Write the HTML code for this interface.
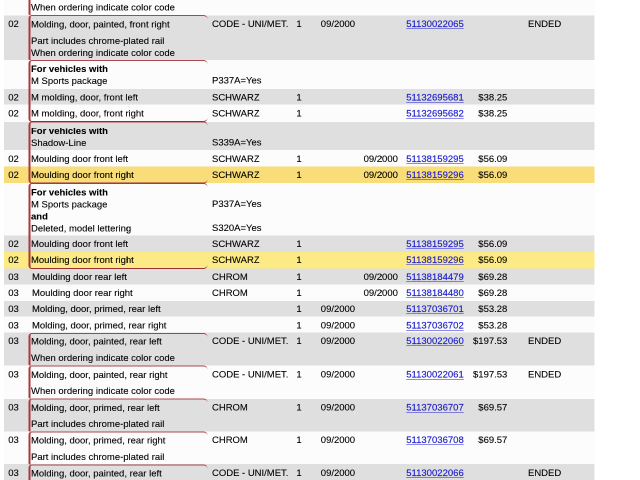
<!DOCTYPE html>
<html><head><meta charset="utf-8"><title>Parts</title><style>
html,body{margin:0;padding:0;background:#fff;}
body{width:640px;height:480px;overflow:hidden;position:relative;}
#w{position:absolute;left:0;top:0;width:1280px;height:960px;transform:scale(0.5);transform-origin:0 0;
 font-family:"Liberation Sans",Helvetica,Arial,sans-serif;font-size:18.98px;line-height:24px;color:#000;-webkit-text-stroke:0.2px #000;overflow:hidden;will-change:transform;}
.r{position:absolute;left:8px;width:1181px;}
.t{position:absolute;white-space:nowrap;}
.b{font-weight:bold;}
a{color:#1d1dcc;text-decoration:underline;-webkit-text-stroke:0.3px #1d1dcc;font-size:19.06px;text-underline-offset:2.6px;text-decoration-thickness:1.4px;}
.g{position:absolute;left:56.5px;width:358.5px;box-sizing:border-box;border-left:4px solid #aa383d;border-top:2px solid rgba(160,40,50,0.85);border-radius:6.5px 8px 0 2px;}
.gb{border-bottom:2px solid #9c3037;border-radius:6.5px 8px 8px 6.5px;}
</style></head><body><div id="w">
<div class="r" style="top:-10px;height:41px;background:#fcfcfc"></div>
<div class="r" style="top:31px;height:89px;background:#dfdfdf"></div>
<div class="r" style="top:120px;height:58px;background:#fcfcfc"></div>
<div class="r" style="top:178px;height:31px;background:#dfdfdf"></div>
<div class="r" style="top:209px;height:35px;background:#fcfcfc"></div>
<div class="r" style="top:244px;height:56px;background:#dfdfdf"></div>
<div class="r" style="top:300px;height:33px;background:#fcfcfc"></div>
<div class="r" style="top:333px;height:33px;background:#f9dd78"></div>
<div class="r" style="top:366px;height:105px;background:#fcfcfc"></div>
<div class="r" style="top:471px;height:33px;background:#dfdfdf"></div>
<div class="r" style="top:504px;height:33px;background:#fceb84"></div>
<div class="r" style="top:537px;height:32px;background:#dfdfdf"></div>
<div class="r" style="top:569px;height:33px;background:#fcfcfc"></div>
<div class="r" style="top:602px;height:31px;background:#dfdfdf"></div>
<div class="r" style="top:633px;height:32px;background:#fcfcfc"></div>
<div class="r" style="top:665px;height:66px;background:#dfdfdf"></div>
<div class="r" style="top:731px;height:67px;background:#fcfcfc"></div>
<div class="r" style="top:798px;height:65px;background:#dfdfdf"></div>
<div class="r" style="top:863px;height:65px;background:#fcfcfc"></div>
<div class="r" style="top:928px;height:52px;background:#dfdfdf"></div>
<div class="g" style="top:-21px;height:51px"></div>
<div class="g" style="top:30px;height:90px"></div>
<div class="g gb" style="top:120px;height:124.2px"></div>
<div class="g gb" style="top:243.2px;height:123.8px"></div>
<div class="g gb" style="top:366px;height:172.2px"></div>
<div class="g" style="top:666.4px;height:64.2px"></div>
<div class="g" style="top:730.6px;height:66.6px"></div>
<div class="g" style="top:797.2px;height:65.4px"></div>
<div class="g" style="top:862.6px;height:66.2px"></div>
<div class="g" style="top:928.8px;height:70.2px"></div>
<div class="t" style="left:62px;top:2.92px">When ordering indicate color code</div>
<div class="t" style="left:16.4px;top:35.52px">02</div>
<div class="t" style="left:62px;top:36.52px">Molding, door, painted, front right</div>
<div class="t" style="left:424px;top:35.52px">CODE - UNI/MET.</div>
<div class="t" style="left:592.8px;top:35.52px">1</div>
<div class="t" style="left:641.6px;top:35.52px">09/2000</div>
<div class="t" style="left:812.4px;top:35.52px"><a>51130022065</a></div>
<div class="t" style="left:1056px;top:35.52px">ENDED</div>
<div class="t" style="left:62px;top:69.72px">Part includes chrome-plated rail</div>
<div class="t" style="left:62px;top:93.52px">When ordering indicate color code</div>
<div class="t b" style="left:62px;top:126.32px">For vehicles with</div>
<div class="t" style="left:62px;top:150.32px">M Sports package</div>
<div class="t" style="left:424px;top:149.32px">P337A=Yes</div>
<div class="t" style="left:16.4px;top:182.72px">02</div>
<div class="t" style="left:62px;top:182.72px">M molding, door, front left</div>
<div class="t" style="left:424px;top:182.72px">SCHWARZ</div>
<div class="t" style="left:592.8px;top:182.72px">1</div>
<div class="t" style="left:812.4px;top:182.72px"><a>51132695681</a></div>
<div class="t" style="right:265.4px;top:182.72px">$38.25</div>
<div class="t" style="left:16.4px;top:214.72px">02</div>
<div class="t" style="left:62px;top:214.72px">M molding, door, front right</div>
<div class="t" style="left:424px;top:214.72px">SCHWARZ</div>
<div class="t" style="left:592.8px;top:214.72px">1</div>
<div class="t" style="left:812.4px;top:214.72px"><a>51132695682</a></div>
<div class="t" style="right:265.4px;top:214.72px">$38.25</div>
<div class="t b" style="left:62px;top:250.42px">For vehicles with</div>
<div class="t" style="left:62px;top:274.12px">Shadow-Line</div>
<div class="t" style="left:424px;top:273.12px">S339A=Yes</div>
<div class="t" style="left:16.4px;top:305.52px">02</div>
<div class="t" style="left:62px;top:305.52px">Moulding door front left</div>
<div class="t" style="left:424px;top:305.52px">SCHWARZ</div>
<div class="t" style="left:592.8px;top:305.52px">1</div>
<div class="t" style="left:727.2px;top:305.52px">09/2000</div>
<div class="t" style="left:812.4px;top:305.52px"><a>51138159295</a></div>
<div class="t" style="right:265.4px;top:305.52px">$56.09</div>
<div class="t" style="left:16.4px;top:337.52px">02</div>
<div class="t" style="left:62px;top:337.52px">Moulding door front right</div>
<div class="t" style="left:424px;top:337.52px">SCHWARZ</div>
<div class="t" style="left:592.8px;top:337.52px">1</div>
<div class="t" style="left:727.2px;top:337.52px">09/2000</div>
<div class="t" style="left:812.4px;top:337.52px"><a>51138159296</a></div>
<div class="t" style="right:265.4px;top:337.52px">$56.09</div>
<div class="t b" style="left:62px;top:373.22px">For vehicles with</div>
<div class="t" style="left:62px;top:396.92px">M Sports package</div>
<div class="t" style="left:424px;top:395.92px">P337A=Yes</div>
<div class="t b" style="left:62px;top:420.82px">and</div>
<div class="t" style="left:62px;top:444.82px">Deleted, model lettering</div>
<div class="t" style="left:424px;top:443.82px">S320A=Yes</div>
<div class="t" style="left:16.4px;top:475.72px">02</div>
<div class="t" style="left:62px;top:475.72px">Moulding door front left</div>
<div class="t" style="left:424px;top:475.72px">SCHWARZ</div>
<div class="t" style="left:592.8px;top:475.72px">1</div>
<div class="t" style="left:812.4px;top:475.72px"><a>51138159295</a></div>
<div class="t" style="right:265.4px;top:475.72px">$56.09</div>
<div class="t" style="left:16.4px;top:508.12px">02</div>
<div class="t" style="left:62px;top:508.12px">Moulding door front right</div>
<div class="t" style="left:424px;top:508.12px">SCHWARZ</div>
<div class="t" style="left:592.8px;top:508.12px">1</div>
<div class="t" style="left:812.4px;top:508.12px"><a>51138159296</a></div>
<div class="t" style="right:265.4px;top:508.12px">$56.09</div>
<div class="t" style="left:16.4px;top:542.12px">03</div>
<div class="t" style="left:64px;top:542.12px">Moulding door rear left</div>
<div class="t" style="left:424px;top:542.12px">CHROM</div>
<div class="t" style="left:592.8px;top:542.12px">1</div>
<div class="t" style="left:727.2px;top:542.12px">09/2000</div>
<div class="t" style="left:812.4px;top:542.12px"><a>51138184479</a></div>
<div class="t" style="right:265.4px;top:542.12px">$69.28</div>
<div class="t" style="left:16.4px;top:573.82px">03</div>
<div class="t" style="left:64px;top:573.82px">Moulding door rear right</div>
<div class="t" style="left:424px;top:573.82px">CHROM</div>
<div class="t" style="left:592.8px;top:573.82px">1</div>
<div class="t" style="left:727.2px;top:573.82px">09/2000</div>
<div class="t" style="left:812.4px;top:573.82px"><a>51138184480</a></div>
<div class="t" style="right:265.4px;top:573.82px">$69.28</div>
<div class="t" style="left:16.4px;top:605.72px">03</div>
<div class="t" style="left:64px;top:605.72px">Molding, door, primed, rear left</div>
<div class="t" style="left:592.8px;top:605.72px">1</div>
<div class="t" style="left:641.6px;top:605.72px">09/2000</div>
<div class="t" style="left:812.4px;top:605.72px"><a>51137036701</a></div>
<div class="t" style="right:265.4px;top:605.72px">$53.28</div>
<div class="t" style="left:16.4px;top:638.72px">03</div>
<div class="t" style="left:64px;top:638.72px">Molding, door, primed, rear right</div>
<div class="t" style="left:592.8px;top:638.72px">1</div>
<div class="t" style="left:641.6px;top:638.72px">09/2000</div>
<div class="t" style="left:812.4px;top:638.72px"><a>51137036702</a></div>
<div class="t" style="right:265.4px;top:638.72px">$53.28</div>
<div class="t" style="left:16.4px;top:670.32px">03</div>
<div class="t" style="left:62px;top:671.32px">Molding, door, painted, rear left</div>
<div class="t" style="left:424px;top:670.32px">CODE - UNI/MET.</div>
<div class="t" style="left:592.8px;top:670.32px">1</div>
<div class="t" style="left:641.6px;top:670.32px">09/2000</div>
<div class="t" style="left:812.4px;top:670.32px"><a>51130022060</a></div>
<div class="t" style="right:265.4px;top:670.32px">$197.53</div>
<div class="t" style="left:1056px;top:670.32px">ENDED</div>
<div class="t" style="left:62px;top:703.52px">When ordering indicate color code</div>
<div class="t" style="left:16.4px;top:737.32px">03</div>
<div class="t" style="left:62px;top:738.32px">Molding, door, painted, rear right</div>
<div class="t" style="left:424px;top:737.32px">CODE - UNI/MET.</div>
<div class="t" style="left:592.8px;top:737.32px">1</div>
<div class="t" style="left:641.6px;top:737.32px">09/2000</div>
<div class="t" style="left:812.4px;top:737.32px"><a>51130022061</a></div>
<div class="t" style="right:265.4px;top:737.32px">$197.53</div>
<div class="t" style="left:1056px;top:737.32px">ENDED</div>
<div class="t" style="left:62px;top:769.52px">When ordering indicate color code</div>
<div class="t" style="left:16.4px;top:803.12px">03</div>
<div class="t" style="left:62px;top:804.12px">Molding, door, primed, rear left</div>
<div class="t" style="left:424px;top:803.12px">CHROM</div>
<div class="t" style="left:592.8px;top:803.12px">1</div>
<div class="t" style="left:641.6px;top:803.12px">09/2000</div>
<div class="t" style="left:812.4px;top:803.12px"><a>51137036707</a></div>
<div class="t" style="right:265.4px;top:803.12px">$69.57</div>
<div class="t" style="left:62px;top:836.32px">Part includes chrome-plated rail</div>
<div class="t" style="left:16.4px;top:868.02px">03</div>
<div class="t" style="left:62px;top:869.02px">Molding, door, primed, rear right</div>
<div class="t" style="left:424px;top:868.02px">CHROM</div>
<div class="t" style="left:592.8px;top:868.02px">1</div>
<div class="t" style="left:641.6px;top:868.02px">09/2000</div>
<div class="t" style="left:812.4px;top:868.02px"><a>51137036708</a></div>
<div class="t" style="right:265.4px;top:868.02px">$69.57</div>
<div class="t" style="left:62px;top:901.92px">Part includes chrome-plated rail</div>
<div class="t" style="left:16.4px;top:933.92px">03</div>
<div class="t" style="left:62px;top:934.92px">Molding, door, painted, rear left</div>
<div class="t" style="left:424px;top:933.92px">CODE - UNI/MET.</div>
<div class="t" style="left:592.8px;top:933.92px">1</div>
<div class="t" style="left:641.6px;top:933.92px">09/2000</div>
<div class="t" style="left:812.4px;top:933.92px"><a>51130022066</a></div>
<div class="t" style="left:1056px;top:933.92px">ENDED</div>
</div></body></html>
